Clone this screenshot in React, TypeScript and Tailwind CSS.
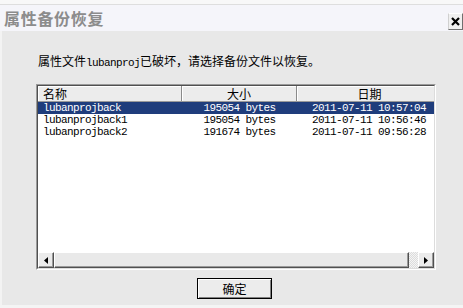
import React from "react";

const cjk = "font-['Noto_Sans_CJK_SC',sans-serif]";
const mono = "font-['Liberation_Mono','Noto_Sans_CJK_SC',monospace] text-[11px] tracking-[-0.6px]";

const rows = [
  { name: "lubanprojback", size: "195054 bytes", date: "2011-07-11 10:57:04", sel: true },
  { name: "lubanprojback1", size: "195054 bytes", date: "2011-07-11 10:56:46", sel: false },
  { name: "lubanprojback2", size: "191674 bytes", date: "2011-07-11 09:56:28", sel: false },
];

function Arrow({ dir }: { dir: "left" | "right" }) {
  return (
    <svg width="4" height="7" viewBox="0 0 4 7">
      {dir === "left" ? <polygon points="4,0 4,7 0,3.5" fill="#000" /> : <polygon points="0,0 0,7 4,3.5" fill="#000" />}
    </svg>
  );
}

function SBtn({ dir }: { dir: "left" | "right" }) {
  return (
    <div className="w-[16px] h-[16px] flex items-center justify-center bg-[#ebebeb] border border-t-white border-l-white border-r-[#505050] border-b-[#505050] shadow-[inset_-1px_-1px_0_#9a9a9a]">
      <Arrow dir={dir} />
    </div>
  );
}

export default function App() {
  return (
    <div className={`w-[463px] h-[308px] flex flex-col bg-[#e9e9e9] overflow-hidden ${cjk}`}>
      <div className="h-[5px] bg-[#f8f8f8] border-b border-[#dedede]" />
      <div className="h-[26px] bg-[#f5f5fa] flex justify-between pl-[4px]">
        <div className="self-center text-[16px] leading-[18px] font-bold text-[#8c8c8c] tracking-[0.7px]">属性备份恢复</div>
        <div className="self-end mb-[1px] w-[15px] h-[17px] bg-[#f0f0f0] border border-t-white border-l-[#d0d0d0] border-r-[#707070] border-b-[#707070] flex items-center justify-center">
          <svg width="9" height="9" viewBox="0 0 9 9">
            <path d="M1 1 L8 8 M8 1 L1 8" stroke="#000" strokeWidth="2.2" />
          </svg>
        </div>
      </div>
      <div className="flex-1 flex flex-col border-l-2 border-[#f3f3f3] bg-[#e8e8e8]">
        <div className="mt-[23px] ml-[36px] text-[12px] leading-[14px] text-black whitespace-nowrap">
          属性文件<span className={mono}>lubanproj</span>已破坏，请选择备份文件以恢复。
        </div>
        <div className="mt-[14px] ml-[34px] w-[400px] h-[186px] border border-t-[#9a9a9a] border-l-[#9a9a9a] border-r-white border-b-white">
          <div className="w-full h-full flex flex-col bg-white border border-t-[#505050] border-l-[#505050] border-r-[#dcdcdc] border-b-[#dcdcdc]">
            <div className="h-[16px] flex text-[12px] leading-[14px] text-black bg-[#ececec] border-b border-[#9a9a9a]">
              <div className="w-[144px] pl-[5px] flex items-center border-r border-[#8a8a8a] shadow-[inset_1px_1px_0_#fff]">名称</div>
              <div className="w-[115px] flex items-center justify-center border-r border-[#8a8a8a] shadow-[inset_1px_1px_0_#fff]">大小</div>
              <div className="flex-1 flex items-center justify-center pl-[8px] shadow-[inset_1px_1px_0_#fff]">日期</div>
            </div>
            <div className="flex-1 flex flex-col">
              {rows.map((r) => (
                <div
                  key={r.name}
                  className={`h-[12px] flex items-center whitespace-nowrap leading-[12px] ${mono} ${r.sel ? "bg-[#1f3d7c] text-white" : "text-black"}`}
                >
                  <div className="w-[144px] pl-[5px]">{r.name}</div>
                  <div className="w-[115px] text-center">{r.size}</div>
                  <div className="flex-1 pl-[15px]">{r.date}</div>
                </div>
              ))}
            </div>
            <div className="h-[16px] flex bg-[#e8e8e8]">
              <SBtn dir="left" />
              <div className="w-[355px] h-[16px] bg-[#e9e9e9] border border-t-white border-l-white border-r-[#505050] border-b-[#505050] shadow-[inset_-1px_-1px_0_#9a9a9a]" />
              <div className="flex-1 bg-[repeating-conic-gradient(#f4f4f4_0%_25%,#dcdcdc_0%_50%)] bg-[length:2px_2px]" />
              <SBtn dir="right" />
            </div>
          </div>
        </div>
        <div className="mt-[8px] ml-[195px] w-[75px] h-[21px] border border-black bg-[#ececec] shadow-[inset_1px_1px_0_#fff,inset_-1px_-1px_0_#808080] flex items-center justify-center text-[12px] leading-[14px] text-black">
          确定
        </div>
      </div>
      <div className="h-[3px] bg-[#f4f4f4]" />
    </div>
  );
}
